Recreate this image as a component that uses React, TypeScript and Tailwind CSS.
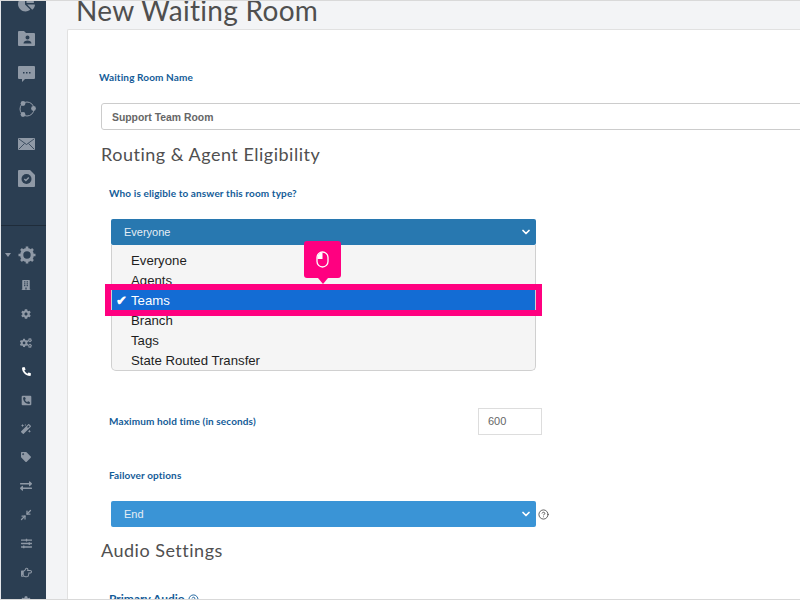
import { useState } from 'react';
import {
  FaChartPie, FaCog, FaCogs, FaPhoneAlt, FaPhoneSquareAlt,
  FaMagic, FaTag, FaExchangeAlt, FaSlidersH, FaRegHandPointRight, FaBuilding,
} from 'react-icons/fa';
import { ChevronDown, CircleHelp, Minimize2 } from 'lucide-react';

const lato = 'font-["Lato",sans-serif]';
const arial = 'font-["Liberation_Sans",Arial,sans-serif]';

function FolderUser() {
  return (
    <svg width="17" height="15" viewBox="0 0 17 15" fill="currentColor">
      <path fillRule="evenodd" d="M1 0h5l2 2h8a1 1 0 0 1 1 1v11a1 1 0 0 1-1 1H1a1 1 0 0 1-1-1V1a1 1 0 0 1 1-1Zm8.500 4.500a2 2 0 1 0 0 4 2 2 0 0 0 0-4ZM5.500 12.500h8c0-1.800-1.800-3-4-3s-4 1.200-4 3Z" />
    </svg>
  );
}

function ChatIcon() {
  return (
    <svg width="17" height="16" viewBox="0 0 17 16">
      <path d="M1 0h15a1 1 0 0 1 1 1v11a1 1 0 0 1-1 1H7l-3 3v-3H1a1 1 0 0 1-1-1V1a1 1 0 0 1 1-1Z" fill="currentColor" />
      <path d="M5 6h1.500v1.500H5ZM8 6h1.500v1.500H8ZM11 6h1.500v1.500H11Z" fill="#2b3e52" />
    </svg>
  );
}

function ShareCircle() {
  return (
    <svg width="18" height="18" viewBox="0 0 18 18" fill="none" stroke="currentColor" strokeWidth="1">
      <circle cx="9" cy="9" r="7" />
      <circle cx="5" cy="3.500" r="2.400" fill="currentColor" stroke="none" />
      <circle cx="15.500" cy="8.500" r="2.400" fill="currentColor" stroke="none" />
      <circle cx="5" cy="14.500" r="2.400" fill="currentColor" stroke="none" />
    </svg>
  );
}

function CheckDoc() {
  return (
    <svg width="17" height="17" viewBox="0 0 17 17">
      <path d="M1 0h11l5 5v11a1 1 0 0 1-1 1H1a1 1 0 0 1-1-1V1a1 1 0 0 1 1-1Z" fill="currentColor" />
      <circle cx="8.500" cy="9" r="5" fill="#2b3e52" />
      <path d="m6.300 9 1.600 1.600 2.900-3" fill="none" stroke="#8f99a6" strokeWidth="1.400" />
    </svg>
  );
}

function GearIcon() {
  return (
    <svg width="18" height="18" viewBox="0 0 18 18" fill="none" stroke="currentColor">
      <circle cx="9" cy="9" r="5.300" strokeWidth="3.200" />
      <path d="M9 0.500v3M9 14.500v3M0.500 9h3M14.500 9h3M3 3l2.100 2.100M12.900 12.900 15 15M15 3l-2.100 2.100M5.100 12.900 3 15" strokeWidth="2.600" />
    </svg>
  );
}

function MouseIcon() {
  return (
    <svg width="13" height="17" viewBox="0 0 13 17" fill="none">
      <rect x="1" y="1" width="11" height="15" rx="5.500" stroke="white" strokeWidth="1.300" />
      <path d="M6.500 1.500A5 5 0 0 0 1.500 6.500V8h5Z" fill="white" />
    </svg>
  );
}

function MailIcon() {
  return (
    <svg width="17" height="12" viewBox="0 0 17 12">
      <rect width="17" height="12" rx="1" fill="currentColor" />
      <path d="m1 1 7.500 5.500L16 1M1 11l5.500-5.500M16 11l-5.500-5.500" fill="none" stroke="#2b3e52" strokeWidth="0.800" />
    </svg>
  );
}

const topIcons = [
  <FaChartPie size={17} />, <FolderUser />, <ChatIcon />,
  <ShareCircle />, <MailIcon />, <CheckDoc />,
];

const lowerIcons = [
  { icon: <FaBuilding size={10} /> },
  { icon: <FaCog size={10} /> },
  { icon: <FaCogs size={12} /> },
  { icon: <FaPhoneAlt size={9} />, active: true },
  { icon: <FaPhoneSquareAlt size={11} /> },
  { icon: <FaMagic size={10} /> },
  { icon: <FaTag size={10} /> },
  { icon: <FaExchangeAlt size={12} /> },
  { icon: <Minimize2 size={12} strokeWidth={2.500} /> },
  { icon: <FaSlidersH size={11} /> },
  { icon: <FaRegHandPointRight size={11} /> },
  { icon: <FaCog size={10} /> },
];

const options = ['Everyone', 'Agents', 'Teams', 'Branch', 'Tags', 'State Routed Transfer'];

function Sidebar() {
  return (
    <aside className="w-[46px] h-full shrink-0 bg-[#2b3e52] border-l border-[#e5e7eb] text-[#8f99a6] overflow-hidden">
      <div className="-mt-[15px] pl-[6px]">
        {topIcons.map((icon, i) => (
          <div key={i} className="h-[35px] flex items-center justify-center">{icon}</div>
        ))}
      </div>
      <div className="mt-[29px] border-t border-[#1f2c3a]" />
      <div className="relative mt-[14px] h-[30px] pl-[6px] flex items-center justify-center">
        <span className="absolute left-[4px] top-[13px] w-0 h-0 border-x-[3px] border-x-transparent border-t-[4px] border-t-[#8f99a6]" />
        <GearIcon />
      </div>
      <div className="mt-[1px] pl-[5px]">
        {lowerIcons.map((item, i) => (
          <div key={i} className={`h-[28.700px] flex items-center justify-center ${item.active ? 'text-white' : ''}`}>
            {item.icon}
          </div>
        ))}
      </div>
    </aside>
  );
}

function Label({ children, className = '' }: { children: React.ReactNode; className?: string }) {
  return <div className={`${lato} font-bold text-[10px] leading-[14px] tracking-[0.12px] text-[#135c98] ${className}`}>{children}</div>;
}

function SelectBar({ value, color }: { value: string; color: string }) {
  return (
    <div className={`w-[425px] h-[26px] rounded-[2px] ${color} ${arial} text-[11px] text-[#e6eef5] pl-[13px] pr-[4px] flex items-center justify-between`}>
      <span>{value}</span>
      <ChevronDown size={12} strokeWidth={3.500} className="text-white" />
    </div>
  );
}

export default function App() {
  const [selected] = useState('Teams');

  return (
    <div className="w-[800px] h-[600px] flex overflow-hidden bg-[#f3f4f6] border-y border-[#d9d9d9]">
      <Sidebar />
      <main className="flex-1 min-w-0 pl-[21px] flex flex-col">
        <h1 className={`${lato} h-[28px] pl-[9px] text-[28px] leading-[18px] tracking-[0.3px] text-[#4f4f4f] whitespace-nowrap`}>
          New Waiting Room
        </h1>
        <section className="flex-1 min-h-0 bg-white border-l border-t border-[#e1e1e1] rounded-tl-[2px] overflow-hidden pl-[32px]">
          <Label className="mt-[40px] -ml-[1px]">Waiting Room Name</Label>
          <div className={`mt-[19px] ml-[1px] w-[720px] h-[27px] border border-[#cccccc] rounded-l-[3px] pl-[10px] pt-[2px] flex items-center ${arial} font-bold text-[10.400px] text-[#666666]`}>
            Support Team Room
          </div>
          <h2 className={`${lato} mt-[10px] ml-[1px] text-[18px] leading-[28px] tracking-[0.5px] text-[#505050]`}>
            Routing &amp; Agent Eligibility
          </h2>
          <Label className="mt-[18px] ml-[9px]">Who is eligible to answer this room type?</Label>

          <div className="relative mt-[19px] ml-[11px] w-[425px]">
            <SelectBar value="Everyone" color="bg-[#2878b0]" />
            <div className={`absolute left-0 top-[26px] w-[425px] h-[126px] py-[5px] bg-[#f5f5f5] border border-[#d0d0d0] border-t-0 rounded-b-[5px] ${arial} text-[13.200px] leading-[22px] text-[#1e1e1e]`}>
              {options.map((option) => (
                <div
                  key={option}
                  className={`relative h-[20px] pl-[19px] ${option === selected ? 'bg-[#136cd4] text-white' : ''}`}
                >
                  {option === selected && <span className="absolute left-[4px] top-0 font-bold">✔</span>}
                  {option}
                </div>
              ))}
            </div>
            <div className="absolute -left-[6px] top-[65px] w-[437px] h-[32px] border-[6px] border-[#ff0080]" />
            <div className="absolute left-[193px] top-[22px] w-[37px] h-[37px] rounded-[3px] bg-[#ff0080] flex items-center justify-center">
              <MouseIcon />
              <span className="absolute left-[14px] -bottom-[6px] w-0 h-0 border-x-[5px] border-x-transparent border-t-[6px] border-t-[#ff0080]" />
            </div>
          </div>

          <div className="mt-[163px] ml-[9px] w-[433px] h-[27px] flex items-center justify-between">
            <Label className="-mt-[1px]">Maximum hold time (in seconds)</Label>
            <div className={`w-[64px] h-[27px] border border-[#dddddd] pl-[9px] flex items-center ${arial} text-[11px] text-[#666666]`}>600</div>
          </div>
          <Label className="mt-[33px] ml-[9px]">Failover options</Label>
          <div className="mt-[19px] ml-[11px] flex items-center gap-[2px]">
            <SelectBar value="End" color="bg-[#3a94d6]" />
            <CircleHelp size={11} strokeWidth={1.800} className="text-[#444444]" />
          </div>
          <h2 className={`${lato} mt-[9px] ml-[1px] text-[18px] leading-[28px] tracking-[0.5px] text-[#505050]`}>Audio Settings</h2>
          <div className={`${lato} mt-[27px] ml-[9px] flex items-center gap-[3px] font-bold text-[12px] leading-[16px] text-[#135c98]`}>
            Primary Audio <CircleHelp size={11} strokeWidth={2} />
          </div>
        </section>
      </main>
    </div>
  );
}
